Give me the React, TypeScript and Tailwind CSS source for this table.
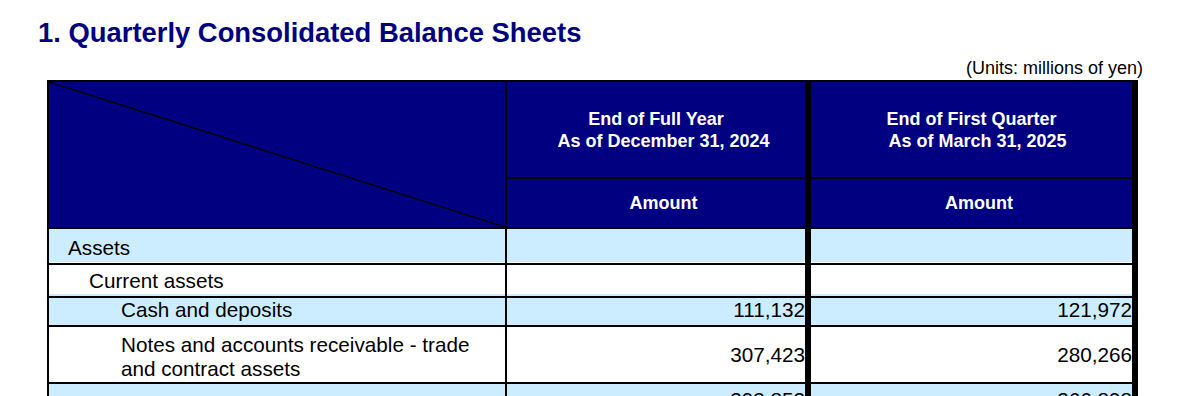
export default function App() {
  const rows = [
    { label: "Assets", pl: "pl-[19px]", h: "h-[33px]", bg: "bg-[#ccecff]", a: "", b: "", pt: "pt-[3px]" },
    { label: "Current assets", pl: "pl-[40px]", h: "h-[32px]", bg: "bg-white", a: "", b: "", pt: "pt-[3px]" },
    { label: "Cash and deposits", pl: "pl-[72px]", h: "h-[33px]", bg: "bg-[#ccecff]", a: "111,132", b: "121,972", pt: "pt-0" },
  ];

  return (
    <div className="h-[396px] w-[1198px] overflow-hidden bg-white font-['Liberation_Sans',Arial,sans-serif] text-black">
      {/* Title */}
      <h1 className="pl-[38px] pt-[17px] text-[27.4px] leading-[32px] font-bold text-[#000080]">
        1. Quarterly Consolidated Balance Sheets
      </h1>
      <div className="mt-[8px] pr-[55px] text-right text-[18px] leading-[22px]">(Units: millions of yen)</div>

      {/* Table */}
      <div className="mt-[1px] ml-[47px] w-[1091px] border-t-2 border-l-2 border-black">
        <div className="grid grid-cols-[458px_304px_327px] grid-rows-[97px_50px]">
          <div className="relative row-span-2 border-r-2 border-b-2 border-black bg-[#000080]">
            <svg className="absolute inset-0 h-full w-full" preserveAspectRatio="none" viewBox="0 0 100 100">
              <line x1="0" y1="0" x2="100" y2="100" stroke="#000" strokeWidth="1.4" vectorEffect="non-scaling-stroke" />
            </svg>
          </div>
          <div className="flex flex-col items-center justify-center border-r-[6px] border-b-2 border-black bg-[#000080] text-[18px] leading-[22px] font-bold text-white">
            <span>End of Full Year</span>
            <span className="pl-[15px]">As of December 31, 2024</span>
          </div>
          <div className="flex flex-col items-center justify-center border-r-[6px] border-b-2 border-black bg-[#000080] text-[18px] leading-[22px] font-bold text-white">
            <span>End of First Quarter</span>
            <span className="pl-[12px]">As of March 31, 2025</span>
          </div>
          <div className="flex items-center justify-center border-r-[6px] border-b-2 border-black bg-[#000080] pl-[15px] text-[18px] font-bold text-white">
            Amount
          </div>
          <div className="flex items-center justify-center border-r-[6px] border-b-2 border-black bg-[#000080] pl-[15px] text-[18px] font-bold text-white">
            Amount
          </div>
        </div>

        {rows.map((r) => (
          <div key={r.label} className={`grid grid-cols-[458px_304px_327px] ${r.h} ${r.bg} text-[20.7px]`}>
            <div className={`flex items-center border-r-2 border-b-2 border-black ${r.pl} ${r.pt}`}>{r.label}</div>
            <div className="flex items-center justify-end border-r-[6px] border-b-2 border-black">{r.a}</div>
            <div className="flex items-center justify-end border-r-[6px] border-b-2 border-black">{r.b}</div>
          </div>
        ))}

        <div className="grid h-[57px] grid-cols-[458px_304px_327px] bg-white text-[20.7px]">
          <div className="border-r-2 border-b-2 border-black pt-[6px] pl-[72px] leading-[24px]">
            Notes and accounts receivable - trade
            <br />
            and contract assets
          </div>
          <div className="flex items-center justify-end border-r-[6px] border-b-2 border-black">307,423</div>
          <div className="flex items-center justify-end border-r-[6px] border-b-2 border-black">280,266</div>
        </div>

        <div className="grid h-[33px] grid-cols-[458px_304px_327px] bg-[#ccecff] text-[20.7px]">
          <div className="border-r-2 border-b-2 border-black" />
          <div className="flex items-center justify-end border-r-[6px] border-b-2 border-black">293,852</div>
          <div className="flex items-center justify-end border-r-[6px] border-b-2 border-black">266,898</div>
        </div>
      </div>
    </div>
  );
}
